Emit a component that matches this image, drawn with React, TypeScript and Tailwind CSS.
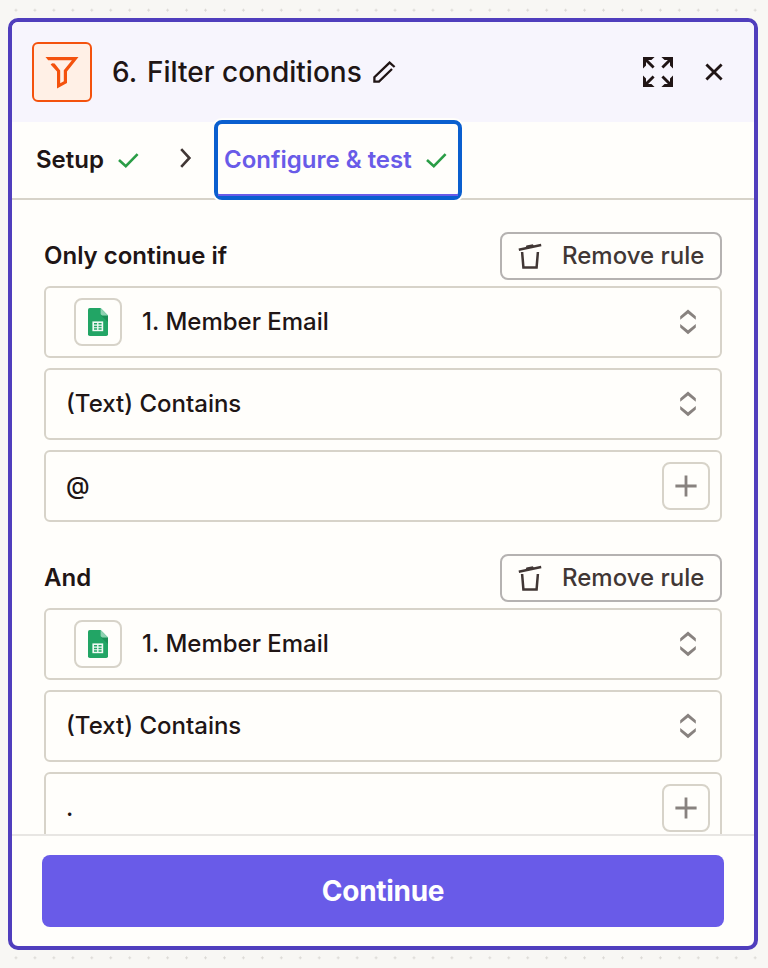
import React from 'react';

type Rule = {
  id: number;
  label: string;
  field: string;
  condition: string;
  value: string;
};

const rules: Rule[] = [
  { id: 1, label: 'Only continue if', field: '1. Member Email', condition: '(Text) Contains', value: '@' },
  { id: 2, label: 'And', field: '1. Member Email', condition: '(Text) Contains', value: '.' },
];

const FilterIcon = () => (
  <svg className="mt-px" width="34" height="32" viewBox="0 0 34 32" fill="#f4520d">
    <path d="M0.5 0H33.5L22 14.5V26L12 31.5V14.5L5.6 7.5L7.2 6.2L9.6 6.5L15.2 13.4V26.2L18.8 24.2V13.3L26.9 3.3H3.2Z" />
  </svg>
);

const PencilIcon = () => (
  <svg width="24" height="24" viewBox="0 0 24 24" fill="none" stroke="#201515" strokeWidth="2.3">
    <path d="M22.6 7L17.6 2.6L2.4 17.2V21.6H7L20 9" />
  </svg>
);

const ExpandIcon = () => (
  <svg width="30" height="30" viewBox="0 0 30 30" fill="#201515">
    <path d="M0 0H11.6L8.4 3H5.1L11.6 9.4L9.6 11.5L3 5V8.4L0 11.6Z" />
    <path d="M30 0H18.4L21.6 3H24.9L18.4 9.4L20.4 11.5L27 5V8.4L30 11.6Z" />
    <path d="M0 30H11.6L8.4 27H5.1L11.6 20.6L9.6 18.5L3 25V21.6L0 18.4Z" />
    <path d="M30 30H18.4L21.6 27H24.9L18.4 20.6L20.4 18.5L27 25V21.6L30 18.4Z" />
  </svg>
);

const CloseIcon = () => (
  <svg width="18" height="18" viewBox="0 0 18 18" fill="none" stroke="#201515" strokeWidth="2.8">
    <path d="M1.4 1.4L16.6 16.6M16.6 1.4L1.4 16.6" />
  </svg>
);

const CheckIcon = () => (
  <svg width="22" height="16" viewBox="0 0 22 16" fill="none" stroke="#2a9d46" strokeWidth="2.6">
    <path d="M1 8L7.8 14.2L19.6 2.2" />
  </svg>
);

const ChevronIcon = () => (
  <svg width="12" height="20" viewBox="0 0 12 20" fill="none" stroke="#413735" strokeWidth="2.6">
    <path d="M1.2 1.2L9.4 10L1.2 18.8" />
  </svg>
);

const TrashIcon = () => (
  <svg width="24" height="28" viewBox="0 0 24 28" fill="none" stroke="#413735">
    <path d="M0.8 7.7L23.2 3.1" strokeWidth="2.6" />
    <path d="M7.4 6L8.4 3.5L14.8 2.2L16.2 4.2Z" fill="#413735" stroke="none" />
    <path d="M4.1 10L5.4 25.4H18.6L19.9 10" strokeWidth="2.5" />
  </svg>
);

const SortIcon = () => (
  <svg width="16" height="26" viewBox="0 0 16 26" fill="#88827f">
    <path d="M8 0.6L15.8 7.2V10.8L8 4.5L0.2 10.8V7.2Z" />
    <path d="M8 25.2L15.8 18.6V15L8 21.3L0.2 15V18.6Z" />
  </svg>
);

const PlusIcon = () => (
  <svg width="22" height="22" viewBox="0 0 22 22" fill="none" stroke="#88827f" strokeWidth="2.8">
    <path d="M11 0.4V21.6M0.4 11H21.6" />
  </svg>
);

const SheetsIcon = () => (
  <svg width="20" height="28" viewBox="0 0 20 28">
    <path d="M1.8 0H12.6L20 7.4V26.2Q20 28 18.2 28H1.8Q0 28 0 26.2V1.8Q0 0 1.8 0Z" fill="#22a565" />
    <path d="M13 7.4H20V14Z" fill="#1c8f57" />
    <path d="M12.6 0L20 7.4H14.4Q12.6 7.4 12.6 5.6Z" fill="#8ed1b1" />
    <path d="M4.4 13.4H15.2V23.2H4.4Z" fill="#f1faf5" />
    <path d="M6 15H9.1V16.6H6ZM10.5 15H13.6V16.6H10.5ZM6 17.7H9.1V19.2H6ZM10.5 17.7H13.6V19.2H10.5ZM6 20.3H9.1V21.8H6ZM10.5 20.3H13.6V21.8H10.5Z" fill="#22a565" />
  </svg>
);

const RuleGroup = ({ rule }: { rule: Rule }) => {
  const box = 'flex h-[72px] items-center rounded-[6px] border-2 border-[#d7d3c9]';

  return (
    <div>
      <div className="mb-1.5 flex h-12 items-center justify-between">
        <h3 className="font-semibold">{rule.label}</h3>
        <button className="flex h-12 w-[222px] items-center rounded-[8px] border-2 border-[#b5b2b1] pl-4 font-medium text-[#413735]">
          <TrashIcon />
          <span className="ml-5 whitespace-nowrap">Remove rule</span>
        </button>
      </div>
      <div className="flex flex-col gap-2.5">
        <div className={`${box} justify-between pr-6 pl-7`}>
          <div className="flex items-center">
            <span className="flex size-12 items-center justify-center rounded-[8px] border-2 border-[#d7d3c9]">
              <SheetsIcon />
            </span>
            <span className="ml-5">{rule.field}</span>
          </div>
          <SortIcon />
        </div>
        <div className={`${box} justify-between pr-6 pl-5`}>
          <span>{rule.condition}</span>
          <SortIcon />
        </div>
        <div className={`${box} justify-between pr-2.5 pl-5`}>
          <span>{rule.value}</span>
          <button className="flex size-12 items-center justify-center rounded-[8px] border-2 border-[#d7d3c9]">
            <PlusIcon />
          </button>
        </div>
      </div>
    </div>
  );
};

const App = () => {
  return (
    <div className="h-[968px] w-[768px] bg-[#f8f7f4] bg-[radial-gradient(circle_at_center,#dcdad6_1px,transparent_1.4px)] bg-[size:18.96px_18.96px] bg-[position:6.5px_0.7px] pt-[18px] pl-2 font-['Inter',sans-serif] text-[24px] leading-[32px] font-medium text-[#201515]">
      <div className="flex h-[932px] w-[750px] flex-col overflow-hidden rounded-[10px] border-4 border-[#503ebd] bg-[#fffefb]">
        <header className="flex h-[100px] shrink-0 items-center bg-[#f7f5fd] pl-5">
          <div className="flex size-[60px] items-center justify-center rounded-[6px] border-2 border-[#f4520d] bg-[#fff0e6]">
            <FilterIcon />
          </div>
          <h2 className="ml-5 flex text-[28px] leading-[36px]">
            <span className="w-[35px]">6.</span>
            <span className="whitespace-nowrap">Filter conditions</span>
          </h2>
          <span className="ml-2.5">
            <PencilIcon />
          </span>
          <div className="mr-[31px] ml-auto flex items-center gap-8">
            <ExpandIcon />
            <CloseIcon />
          </div>
        </header>

        <nav className="flex h-[78px] shrink-0 items-center border-b-2 border-[#d7d3c9] pl-6 font-semibold">
          <span>Setup</span>
          <span className="ml-3.5">
            <CheckIcon />
          </span>
          <span className="ml-10 -mt-1">
            <ChevronIcon />
          </span>
          <div className="relative ml-auto mr-[292px] flex h-20 w-[248px] items-center rounded-[8px] border-4 border-[#0a5fcf] bg-[#fffefb] pl-1.5 text-[#695be8] shadow-[0_0_0_2px_#fffefb]">
            <span className="whitespace-nowrap">Configure &amp; test</span>
            <span className="ml-3.5">
              <CheckIcon />
            </span>
            <span className="absolute inset-x-0 bottom-0 h-0.5 bg-[#695be8]" />
          </div>
        </nav>

        <main className="flex min-h-0 flex-1 flex-col gap-8 overflow-hidden px-8 pt-8">
          {rules.map(rule => (
            <RuleGroup key={rule.id} rule={rule} />
          ))}
        </main>

        <footer className="h-28 shrink-0 border-t-2 border-[#e8e6e3] px-[30px] pt-[19px]">
          <button className="h-[72px] w-full rounded-[8px] bg-[#695be8] text-[28px] font-bold tracking-[-0.3px] text-white">
            Continue
          </button>
        </footer>
      </div>
    </div>
  );
};

export default App;
